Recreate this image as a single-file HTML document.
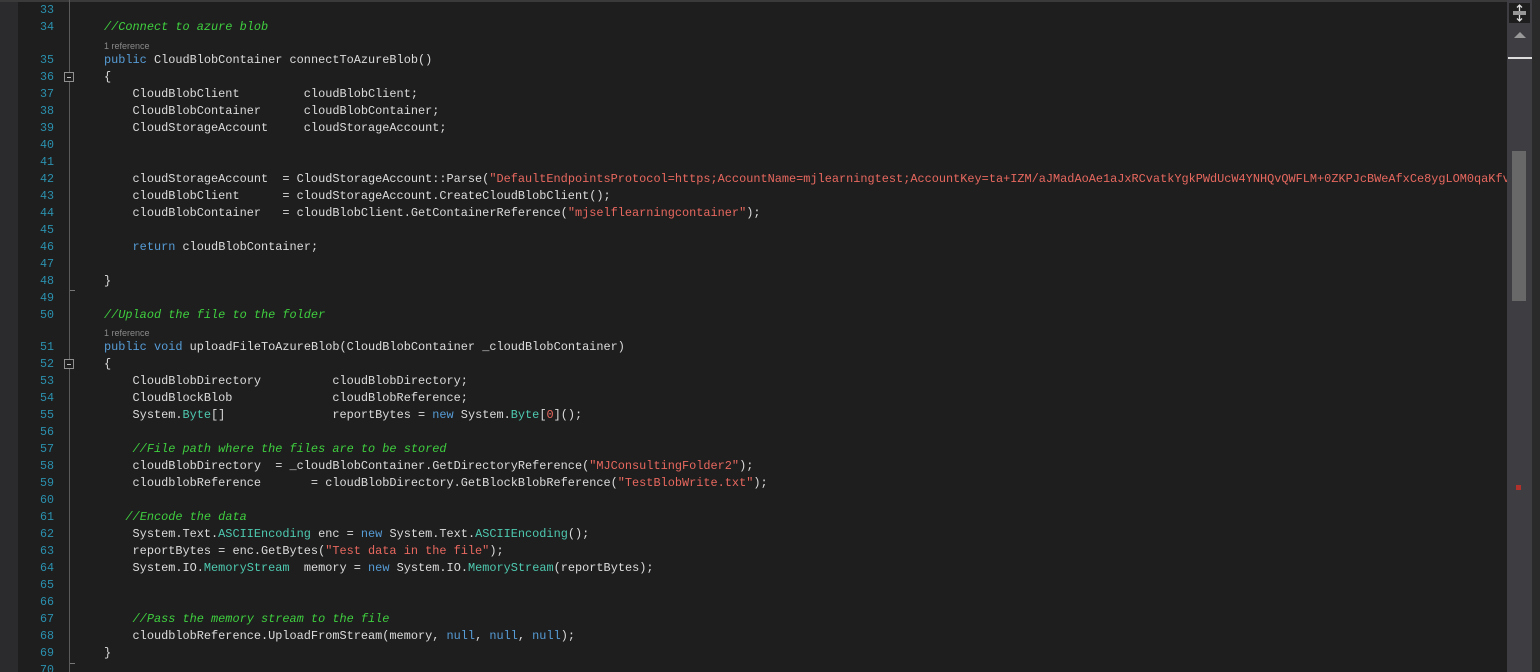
<!DOCTYPE html>
<html><head><meta charset="utf-8"><style>
html,body{margin:0;padding:0;width:1540px;height:672px;overflow:hidden;background:#1e1e1e;}
body{position:relative;font-family:"Liberation Mono",monospace;font-size:11.9px;color:#dcdcdc;}
.ln{position:absolute;left:0;width:54px;text-align:right;color:#2b91af;height:17px;line-height:17px;font-size:11.67px;}
.cd{position:absolute;left:104px;white-space:pre;height:17px;line-height:17px;}
.lens{position:absolute;left:104px;font-family:"Liberation Sans",sans-serif;font-size:9px;color:#8a8a8a;line-height:12px;}
.k{color:#569cd6}.c{color:#3fcf3f;font-style:italic}.s{color:#e8685f}.t{color:#4ec9b0}
.fold{position:absolute;left:64px;width:8px;height:8px;border:1px solid #909090;background:#1e1e1e;}
.fold:after{content:"";position:absolute;left:2px;top:4px;width:4px;height:1px;background:#c0c0c0;}
.endf{position:absolute;left:70px;width:5px;height:1px;background:#777;}
.sb{z-index:2}
</style></head><body>
<div style="position:absolute;left:0;top:0;width:18px;height:672px;background:#2b2b2d"></div>
<div style="position:absolute;left:0;top:0;width:1540px;height:2px;background:#3a3a3a"></div>
<div style="position:absolute;left:69px;top:0;width:1px;height:672px;background:#5a5a5a"></div>

<div class="ln" style="top:2px">33</div>
<div class="ln" style="top:19px">34</div><div class="cd" style="top:19px"><span class="c">//Connect to azure blob</span></div>
<div class="lens" style="top:40px">1 reference</div>
<div class="ln" style="top:52px">35</div><div class="cd" style="top:52px"><span class="k">public</span> CloudBlobContainer connectToAzureBlob()</div>
<div class="ln" style="top:69px">36</div><div class="fold" style="top:72px"></div><div class="cd" style="top:69px">{</div>
<div class="ln" style="top:86px">37</div><div class="cd" style="top:86px">    CloudBlobClient         cloudBlobClient;</div>
<div class="ln" style="top:103px">38</div><div class="cd" style="top:103px">    CloudBlobContainer      cloudBlobContainer;</div>
<div class="ln" style="top:120px">39</div><div class="cd" style="top:120px">    CloudStorageAccount     cloudStorageAccount;</div>
<div class="ln" style="top:137px">40</div>
<div class="ln" style="top:154px">41</div>
<div class="ln" style="top:171px">42</div><div class="cd" style="top:171px">    cloudStorageAccount  = CloudStorageAccount::Parse(<span class="s">"DefaultEndpointsProtocol=https;AccountName=mjlearningtest;AccountKey=ta+IZM/aJMadAoAe1aJxRCvatkYgkPWdUcW4YNHQvQWFLM+0ZKPJcBWeAfxCe8ygLOM0qaKfv</span></div>
<div class="ln" style="top:188px">43</div><div class="cd" style="top:188px">    cloudBlobClient      = cloudStorageAccount.CreateCloudBlobClient();</div>
<div class="ln" style="top:205px">44</div><div class="cd" style="top:205px">    cloudBlobContainer   = cloudBlobClient.GetContainerReference(<span class="s">"mjselflearningcontainer"</span>);</div>
<div class="ln" style="top:222px">45</div>
<div class="ln" style="top:239px">46</div><div class="cd" style="top:239px">    <span class="k">return</span> cloudBlobContainer;</div>
<div class="ln" style="top:256px">47</div>
<div class="ln" style="top:273px">48</div><div class="cd" style="top:273px">}</div>
<div class="ln" style="top:290px">49</div><div class="endf" style="top:290px"></div>
<div class="ln" style="top:307px">50</div><div class="cd" style="top:307px"><span class="c">//Uplaod the file to the folder</span></div>
<div class="lens" style="top:327px">1 reference</div>
<div class="ln" style="top:339px">51</div><div class="cd" style="top:339px"><span class="k">public</span> <span class="k">void</span> uploadFileToAzureBlob(CloudBlobContainer _cloudBlobContainer)</div>
<div class="ln" style="top:356px">52</div><div class="fold" style="top:359px"></div><div class="cd" style="top:356px">{</div>
<div class="ln" style="top:373px">53</div><div class="cd" style="top:373px">    CloudBlobDirectory          cloudBlobDirectory;</div>
<div class="ln" style="top:390px">54</div><div class="cd" style="top:390px">    CloudBlockBlob              cloudBlobReference;</div>
<div class="ln" style="top:407px">55</div><div class="cd" style="top:407px">    System.<span class="t">Byte</span>[]               reportBytes = <span class="k">new</span> System.<span class="t">Byte</span>[<span class="s">0</span>]();</div>
<div class="ln" style="top:424px">56</div>
<div class="ln" style="top:441px">57</div><div class="cd" style="top:441px">    <span class="c">//File path where the files are to be stored</span></div>
<div class="ln" style="top:458px">58</div><div class="cd" style="top:458px">    cloudBlobDirectory  = _cloudBlobContainer.GetDirectoryReference(<span class="s">"MJConsultingFolder2"</span>);</div>
<div class="ln" style="top:475px">59</div><div class="cd" style="top:475px">    cloudblobReference       = cloudBlobDirectory.GetBlockBlobReference(<span class="s">"TestBlobWrite.txt"</span>);</div>
<div class="ln" style="top:492px">60</div>
<div class="ln" style="top:509px">61</div><div class="cd" style="top:509px">   <span class="c">//Encode the data</span></div>
<div class="ln" style="top:526px">62</div><div class="cd" style="top:526px">    System.Text.<span class="t">ASCIIEncoding</span> enc = <span class="k">new</span> System.Text.<span class="t">ASCIIEncoding</span>();</div>
<div class="ln" style="top:543px">63</div><div class="cd" style="top:543px">    reportBytes = enc.GetBytes(<span class="s">"Test data in the file"</span>);</div>
<div class="ln" style="top:560px">64</div><div class="cd" style="top:560px">    System.IO.<span class="t">MemoryStream</span>  memory = <span class="k">new</span> System.IO.<span class="t">MemoryStream</span>(reportBytes);</div>
<div class="ln" style="top:577px">65</div>
<div class="ln" style="top:594px">66</div>
<div class="ln" style="top:611px">67</div><div class="cd" style="top:611px">    <span class="c">//Pass the memory stream to the file</span></div>
<div class="ln" style="top:628px">68</div><div class="cd" style="top:628px">    cloudblobReference.UploadFromStream(memory, <span class="k">null</span>, <span class="k">null</span>, <span class="k">null</span>);</div>
<div class="ln" style="top:645px">69</div><div class="cd" style="top:645px">}</div>
<div class="ln" style="top:662px">70</div><div class="endf" style="top:663px"></div>

<div class="sb" style="position:absolute;left:1507px;top:0;width:25px;height:672px;background:#3e3e42"></div>
<div class="sb" style="position:absolute;left:1532px;top:0;width:8px;height:672px;background:#2a2a2a"></div>
<div class="sb" style="position:absolute;left:1509px;top:3px;width:21px;height:20px;background:#1e1e1e"></div>
<svg class="sb" style="position:absolute;left:1511px;top:4px" width="17" height="18" viewBox="0 0 17 18"><path d="M8.5 1v6M8.5 11v6M6 3.5l2.5-2.5 2.5 2.5M6 14.5l2.5 2.5 2.5-2.5M2 8h13M2 10h13" stroke="#e0e0e0" stroke-width="1.3" fill="none"/></svg>
<svg class="sb" style="position:absolute;left:1514px;top:31px" width="12" height="8"><path d="M0 7L6 1 12 7z" fill="#999"/></svg>
<div class="sb" style="position:absolute;left:1508px;top:57px;width:24px;height:2px;background:#ddd"></div>
<div class="sb" style="position:absolute;left:1512px;top:151px;width:14px;height:150px;background:#686868"></div>
<div class="sb" style="position:absolute;left:1516px;top:485px;width:5px;height:5px;background:#b0302c"></div>
</body></html>
